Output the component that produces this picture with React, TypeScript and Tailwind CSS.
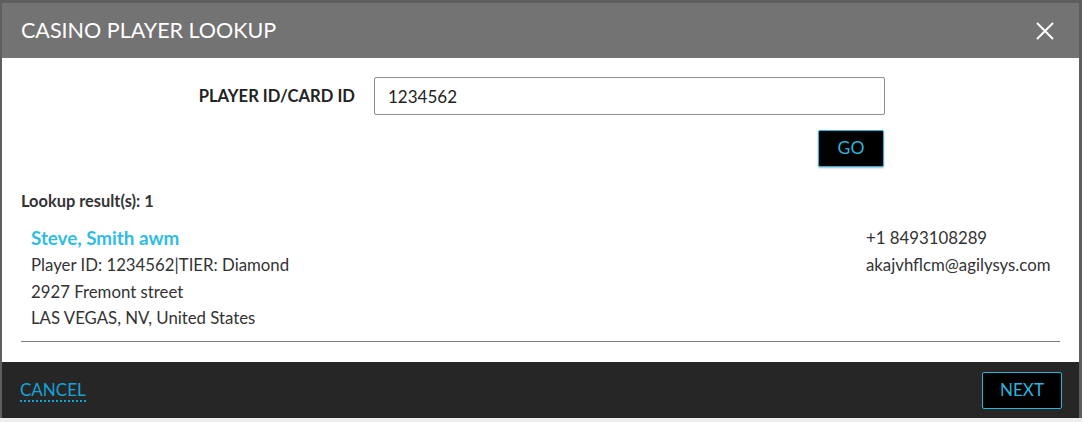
import React from "react";

export default function App() {
  return (
    <div className="w-[1082px] h-[422px] bg-[#5e5e5e] overflow-hidden font-['Lato','Noto_Sans',sans-serif]">
      <div className="pt-[3px] pl-[2px]">
        <div className="w-[1077px] flex flex-col">
          {/* Header */}
          <div className="h-[55px] bg-[#737373] flex items-center justify-between pl-[19px] pr-[24px]">
            <h1 className="text-white text-[21.5px] leading-none">CASINO PLAYER LOOKUP</h1>
            <button className="text-white" aria-label="close">
              <svg width="20" height="20" viewBox="0 0 20 20" fill="none" stroke="white" strokeWidth="2">
                <path d="M2 2 L18 18 M18 2 L2 18" />
              </svg>
            </button>
          </div>
          {/* Body */}
          <div className="h-[304px] bg-white flex flex-col">
            <div className="flex pt-[19px]">
              <div className="w-[353px] h-[38px] flex items-center justify-end">
                <label className="text-[16.6px] font-bold text-[#222]">PLAYER ID/CARD ID</label>
              </div>
              <div className="ml-[19px] w-[511px] flex flex-col items-end">
                <input
                  className="w-[511px] h-[38px] border border-[#8f8f8f] rounded-[2px] px-[13px] text-[17px] text-[#222] outline-none"
                  defaultValue="1234562"
                />
                <button className="mt-[15px] w-[66px] h-[37px] bg-black border border-[#2bb3dc] rounded-[2px] text-[#2bb3dc] text-[17.5px] mr-[1px] shadow-[0_1px_2px_rgba(0,0,0,0.3)]">
                  GO
                </button>
              </div>
            </div>
            <div className="mt-[24px] pl-[19px] text-[16.4px] font-bold text-[#333] leading-[20px]">
              Lookup result(s): 1
            </div>
            <div className="mt-[14px] flex pl-[29px] text-[#333]">
              <div className="flex flex-col w-[835px]">
                <div className="text-[18.8px] font-bold text-[#2fbde4] leading-[26px]">Steve, Smith awm</div>
                <div className="text-[16.8px] leading-[27px]">Player ID: 1234562|TIER: Diamond</div>
                <div className="text-[16.8px] leading-[27px]">2927 Fremont street</div>
                <div className="text-[16.8px] leading-[26px]">LAS VEGAS, NV, United States</div>
              </div>
              <div className="flex flex-col">
                <div className="text-[16.8px] leading-[26px]">+1 8493108289</div>
                <div className="text-[16.8px] leading-[27px]">akajvhflcm@agilysys.com</div>
              </div>
            </div>
            <div className="mt-[10px] mx-[19px] h-px bg-[#7a7a7a]" />
          </div>
          {/* Footer */}
          <div className="h-[56px] bg-[#262626] flex items-center justify-between pl-[18px] pr-[17px]">
            <a className="text-[#16a3d6] text-[17px] leading-[20px] border-b-[2px] border-dotted border-[#16a3d6] mt-[1px] cursor-pointer">
              CANCEL
            </a>
            <button className="w-[80px] h-[37px] bg-black border border-[#2bb3dc] rounded-[2px] text-[#2bb3dc] text-[17px]">
              NEXT
            </button>
          </div>
        </div>
      </div>
      <div className="h-[4px] bg-[#eeeeee]" />
    </div>
  );
}
